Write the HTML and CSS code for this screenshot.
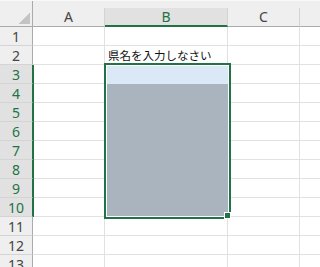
FILE: index.html
```html
<!DOCTYPE html>
<html lang="ja">
<head>
  <meta charset="UTF-8" />
  <title>Sheet1</title>
  <link rel="stylesheet" href="styles.css">
</head>
<body>

  <div class="sheet">

    <div class="row head-row">
      <div class="corner"><span class="corner-mark"></span></div>
      <div class="col-head a">A</div>
      <div class="col-head b sel">B</div>
      <div class="col-head c">C</div>
      <div class="col-head d"></div>
    </div>

    <div class="row"><div class="row-head">1</div><div class="cell a"></div><div class="cell b"></div><div class="cell c"></div><div class="cell d"></div></div>
    <div class="row"><div class="row-head">2</div><div class="cell a"></div><div class="cell b"><span class="text">県名を入力しなさい</span></div><div class="cell c"></div><div class="cell d"></div></div>
    <div class="row"><div class="row-head sel">3</div><div class="cell a"></div><div class="cell b"></div><div class="cell c"></div><div class="cell d"></div></div>
    <div class="row"><div class="row-head sel">4</div><div class="cell a"></div><div class="cell b"></div><div class="cell c"></div><div class="cell d"></div></div>
    <div class="row"><div class="row-head sel">5</div><div class="cell a"></div><div class="cell b"></div><div class="cell c"></div><div class="cell d"></div></div>
    <div class="row"><div class="row-head sel">6</div><div class="cell a"></div><div class="cell b"></div><div class="cell c"></div><div class="cell d"></div></div>
    <div class="row"><div class="row-head sel">7</div><div class="cell a"></div><div class="cell b"></div><div class="cell c"></div><div class="cell d"></div></div>
    <div class="row"><div class="row-head sel">8</div><div class="cell a"></div><div class="cell b"></div><div class="cell c"></div><div class="cell d"></div></div>
    <div class="row"><div class="row-head sel">9</div><div class="cell a"></div><div class="cell b"></div><div class="cell c"></div><div class="cell d"></div></div>
    <div class="row"><div class="row-head sel">10</div><div class="cell a"></div><div class="cell b"></div><div class="cell c"></div><div class="cell d"></div></div>
    <div class="row"><div class="row-head">11</div><div class="cell a"></div><div class="cell b"></div><div class="cell c"></div><div class="cell d"></div></div>
    <div class="row"><div class="row-head">12</div><div class="cell a"></div><div class="cell b"></div><div class="cell c"></div><div class="cell d"></div></div>
    <div class="row"><div class="row-head">13</div><div class="cell a"></div><div class="cell b"></div><div class="cell c"></div><div class="cell d"></div></div>

    <!-- selection B3:B10 -->
    <div class="selection">
      <div class="active-cell"></div>
      <div class="range-fill"></div>
      <div class="fill-handle"></div>
    </div>

  </div>

</body>
</html>
```

FILE: styles.css
```css
body {
  margin: 0;
  background: #fff;
  font-family: 'Noto Sans', 'Noto Sans CJK JP', sans-serif;
  overflow: hidden;
}

.sheet {
  position: relative;
  width: 320px;
  height: 267px;
  overflow: hidden;
}

.row {
  display: flex;
  height: 19px;
}

/* header */
.head-row {
  height: 27px;
  background: #efefef;
  border-top: 1px solid #f8f8f8;
  box-sizing: border-box;
}

.corner {
  position: relative;
  width: 33px;
  min-width: 33px;
  height: 26px;
  box-sizing: border-box;
  border-right: 1px solid #ababab;
  border-bottom: 1px solid #ababab;
}

/* little triangle in the select-all corner */
.corner-mark {
  position: absolute;
  right: 2px;
  bottom: 2px;
  width: 11px;
  height: 11px;
  background: linear-gradient(to bottom right, transparent 50%, #c4c4c4 50%);
}

.col-head {
  margin-top: 7px;
  height: 18px;
  line-height: 18px;
  text-align: center;
  font-size: 14px;
  color: #444;
  border-right: 1px solid #d4d4d4;
  border-bottom: 1px solid #ababab;
}

.col-head.sel {
  background: #e1e1e1;
  color: #217346;
  border-bottom: 2px solid #217346;
  height: 17px;
}

.col-head.d {
  border-right: none;
  flex: 1;
}

/* widths */
.a { width: 71px; }
.b { width: 122px; }
.c { width: 71px; }
.d { flex: 1; }

.row-head {
  width: 32px;
  height: 18px;
  line-height: 19px;
  text-align: center;
  font-size: 14px;
  color: #444;
  background: #efefef;
  border-right: 1px solid #ababab;
  border-bottom: 1px solid #d4d4d4;
}

.row-head.sel {
  background: #e1e1e1;
  color: #217346;
  border-right: 1px solid #217346;
  box-shadow: 1px 0 0 #217346;
  position: relative;
}

.cell {
  height: 18px;
  border-right: 1px solid #e1e1e1;
  border-bottom: 1px solid #e1e1e1;
}

.cell.d {
  border-right: none;
}

.cell .text {
  display: block;
  padding: 1px 0 0 3px;
  font-family: 'Noto Sans CJK JP', sans-serif;
  font-size: 11.5px;
  line-height: 17px;
  color: #111;
  white-space: nowrap;
}

/* selection overlay */
.selection {
  position: absolute;
  left: 104px;
  top: 63px;
  width: 121px;
  height: 150px;
  border: 2px solid #217346;
  padding: 1px;
  background: #fff;
  display: flex;
  flex-direction: column;
}

.active-cell {
  height: 18px;
  background: #dbe8f6;
}

.range-fill {
  flex: 1;
  background: #aab4bf;
}

.fill-handle {
  position: absolute;
  right: -2px;
  bottom: -2px;
  width: 5px;
  height: 5px;
  background: #217346;
  border: 1px solid #fff;
}
```
